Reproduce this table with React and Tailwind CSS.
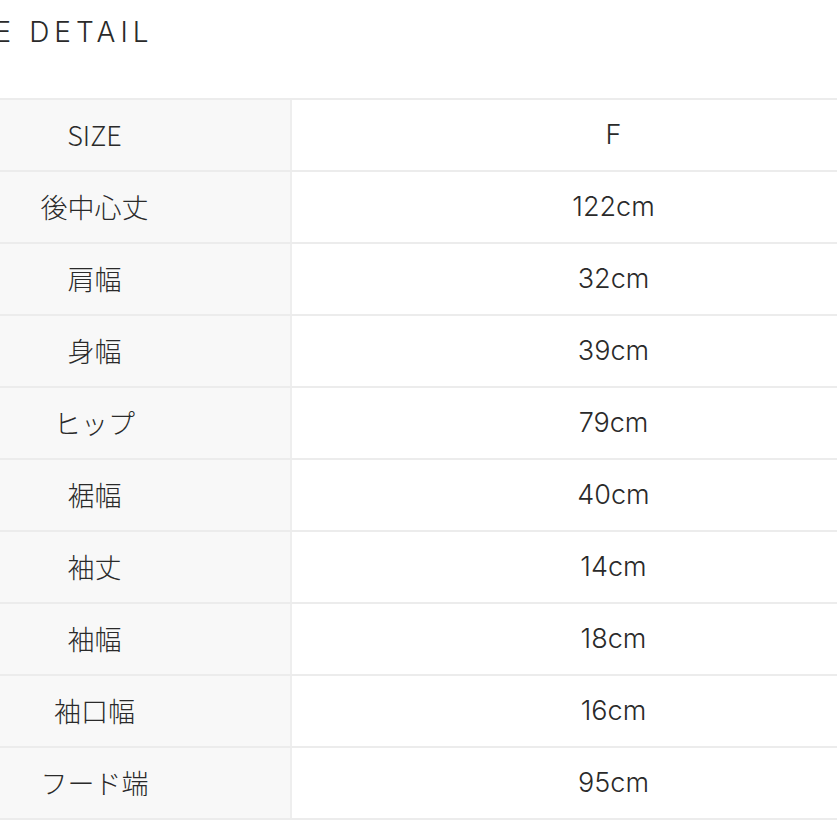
export default function App() {
  const rows = [
    ["SIZE", "F"],
    ["後中心丈", "122cm"],
    ["肩幅", "32cm"],
    ["身幅", "39cm"],
    ["ヒップ", "79cm"],
    ["裾幅", "40cm"],
    ["袖丈", "14cm"],
    ["袖幅", "18cm"],
    ["袖口幅", "16cm"],
    ["フード端", "95cm"],
  ];
  return (
    <div className="w-[837px] h-[837px] overflow-hidden bg-white text-[#2a2a2a]">
      <div className="ml-[-101px] w-[1036px]">
        <div className="h-[98px] pt-[14px] flex">
          <h2
            className="text-[28px] font-light tracking-[0.18em] leading-[36px] ml-[38px] whitespace-nowrap"
            style={{ fontFamily: "Inter, 'Noto Sans', sans-serif" }}
          >
            SIZE DETAIL
          </h2>
        </div>
        <div className="border-b-2 border-[#ececec]">
          {rows.map(([k, v]) => (
            <div key={k} className="flex h-[72px] border-t-2 border-[#ececec]">
              <div
                className="w-[393px] shrink-0 bg-[#f8f8f8] border-r-2 border-[#eeeeee] flex items-center justify-center text-[27px] font-light"
                style={{ fontFamily: "'Noto Sans CJK JP', sans-serif" }}
              >
                {k}
              </div>
              <div
                className="flex-1 flex items-center justify-center text-[27px] font-light"
                style={{ fontFamily: "Inter, 'Noto Sans', sans-serif" }}
              >
                {v}
              </div>
            </div>
          ))}
        </div>
      </div>
    </div>
  );
}
